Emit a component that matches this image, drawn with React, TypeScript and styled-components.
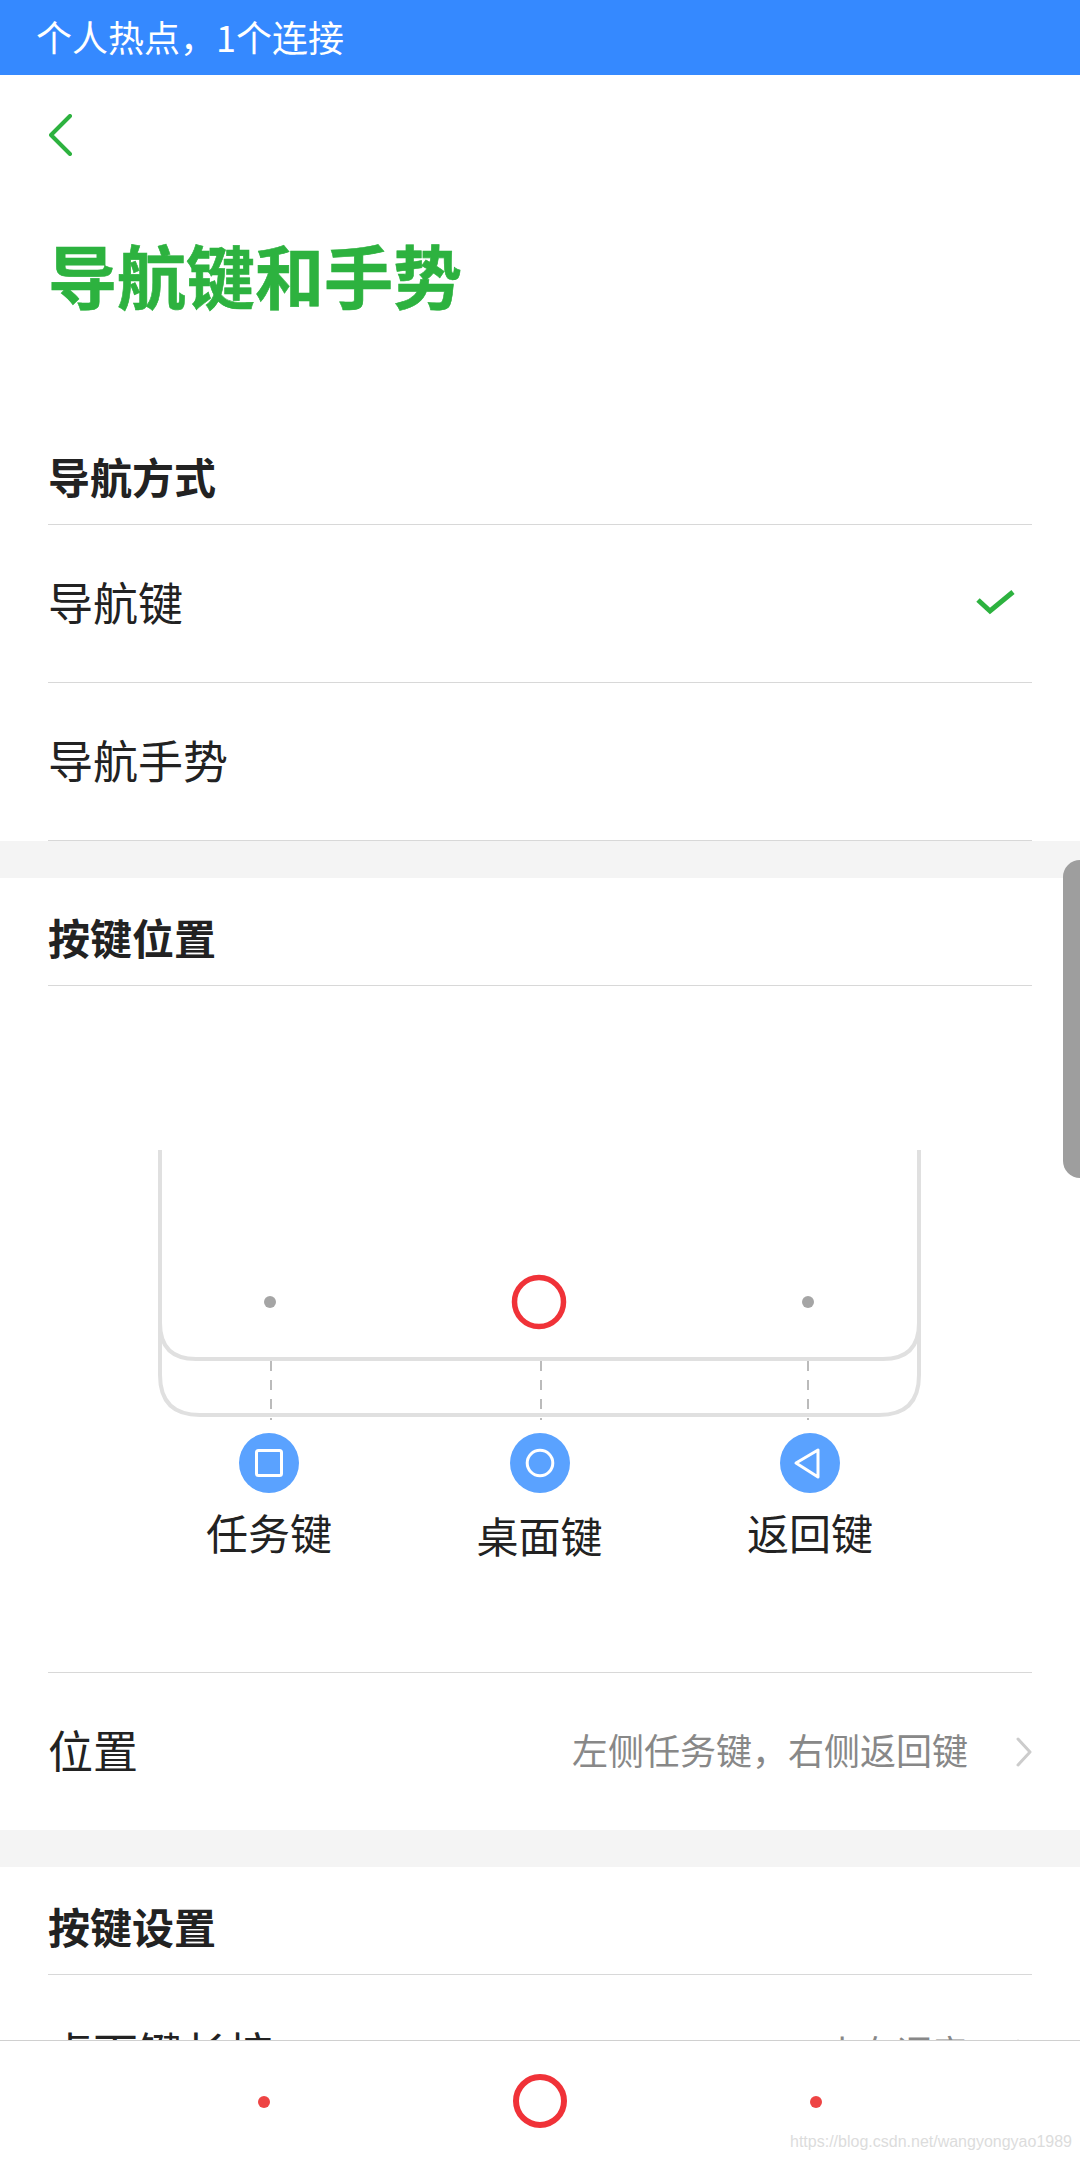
import styled, { createGlobalStyle } from "styled-components";

const GlobalStyle = createGlobalStyle`
    html, body {
        margin: 0;
        padding: 0;
        background: #fff;
    }
    * {
        box-sizing: border-box;
    }
`;

const LINE_COLOR = "#e0e0e0";
const RED = "#f03238";

// phone outline with the three on-screen keys and their guide lines
function PhoneDiagram() {
    return (
        <PhoneSvg viewBox="0 0 984 270">
            <g fill="none" stroke={LINE_COLOR} strokeWidth="4">
                <path d="M112 170 V225 Q112 265 152 265 H831 Q871 265 871 225 V170" />
                <path d="M112 0 V173 Q112 209 148 209 H835 Q871 209 871 173 V0" fill="#fff" />
            </g>
            <g stroke="#bbb" strokeWidth="2" strokeDasharray="10 9">
                <line x1="223" y1="211" x2="223" y2="270" />
                <line x1="493" y1="211" x2="493" y2="270" />
                <line x1="760" y1="211" x2="760" y2="270" />
            </g>
            <circle cx="222" cy="152" r="6" fill="#a5a5a5" />
            <circle cx="491" cy="152" r="24.5" fill="none" stroke={RED} strokeWidth="5.5" />
            <circle cx="760" cy="152" r="6" fill="#a5a5a5" />
        </PhoneSvg>
    );
}

function KeyGlyph({ kind }: { kind: "task" | "home" | "back" }) {
    return (
        <svg width="60" height="60" viewBox="0 0 60 60" fill="none" stroke="#fff" strokeWidth="3" strokeLinejoin="round">
            {kind === "task" && <rect x="17.5" y="17.5" width="25" height="25" rx="2" />}
            {kind === "home" && <circle cx="30" cy="30" r="12.8" />}
            {kind === "back" && <path d="M16 30 L38 17 V44 Z" />}
        </svg>
    );
}

const keys = [
    { label: "任务键", kind: "task" as const, drop: 0 },
    { label: "桌面键", kind: "home" as const, drop: 3 },
    { label: "返回键", kind: "back" as const, drop: 0 },
];

export default function App() {
    return (
        <Page>
            <GlobalStyle />
            <StatusBar>个人热点，1个连接</StatusBar>

            <BackRow>
                <svg width="24" height="42" viewBox="0 0 24 42" fill="none" stroke="#2db23f" strokeWidth="4" strokeLinecap="round" strokeLinejoin="round">
                    <path d="M21 2 L2 21 L21 40" />
                </svg>
            </BackRow>

            <PageTitle>导航键和手势</PageTitle>

            <Section>
                <SectionHeader>导航方式</SectionHeader>
                <Row>
                    <RowLabel>导航键</RowLabel>
                    <CheckIcon width="40" height="30" viewBox="0 0 40 30" fill="none" stroke="#2db23f" strokeWidth="5">
                        <path d="M2 11 L14 22 L37 3" />
                    </CheckIcon>
                </Row>
                <Row>
                    <RowLabel>导航手势</RowLabel>
                </Row>
            </Section>

            <Band />

            <Section>
                <SectionHeader>按键位置</SectionHeader>
                <Illustration>
                    <PhoneDiagram />
                    <KeyRow>
                        {keys.map((key) => (
                            <KeyColumn key={key.label}>
                                <KeyBadge>
                                    <KeyGlyph kind={key.kind} />
                                </KeyBadge>
                                <KeyLabel $drop={key.drop}>{key.label}</KeyLabel>
                            </KeyColumn>
                        ))}
                    </KeyRow>
                </Illustration>
                <Row $plain>
                    <RowLabel>位置</RowLabel>
                    <RowValue>左侧任务键，右侧返回键</RowValue>
                    <Chevron />
                </Row>
            </Section>

            <Band />

            <Section>
                <SectionHeader>按键设置</SectionHeader>
                <Row>
                    <RowLabel>桌面键长按</RowLabel>
                    <RowValue>小布语音</RowValue>
                    <Chevron />
                </Row>
            </Section>

            <ScrollHandle />

            <NavBar>
                <NavDot />
                <NavRing />
                <NavDot />
            </NavBar>
            <Watermark>https://blog.csdn.net/wangyongyao1989</Watermark>
        </Page>
    );
}

function Chevron() {
    return (
        <ChevronSvg width="16" height="30" viewBox="0 0 16 30" fill="none" stroke="#ccc" strokeWidth="3" strokeLinecap="round" strokeLinejoin="round">
            <path d="M2 2 L14 15 L2 28" />
        </ChevronSvg>
    );
}

const Page = styled.div`
    position: relative;
    width: 1080px;
    height: 2160px;
    overflow: hidden;
    background: #fff;
    color: #222;
    font-family: "Noto Sans CJK SC", "Noto Sans", sans-serif;
`;

const StatusBar = styled.div`
    height: 75px;
    padding-left: 36px;
    background: #3589ff;
    color: #fff;
    font-size: 36px;
    line-height: 72px;
`;

const BackRow = styled.div`
    height: 110px;
    padding: 39px 0 0 49px;
`;

const PageTitle = styled.h1`
    margin: 0 0 100px;
    padding-left: 48px;
    height: 132px;
    color: #2db23f;
    font-size: 69px;
    font-weight: 700;
    line-height: 178px;
    -webkit-text-stroke: 0.6px #2db23f;
`;

const Section = styled.section`
    padding: 0 48px;
    background: #fff;
`;

const SectionHeader = styled.h2`
    display: flex;
    align-items: flex-end;
    height: 108px;
    margin: 0;
    padding-bottom: 3px;
    border-bottom: 1px solid #d8d8d8;
    font-size: 42px;
    font-weight: 700;
    line-height: 90px;
`;

const Row = styled.div<{ $plain?: boolean }>`
    display: flex;
    align-items: center;
    height: ${(p) => (p.$plain ? "157px" : "158px")};
    border-bottom: ${(p) => (p.$plain ? "none" : "1px solid #d8d8d8")};
`;

const RowLabel = styled.span`
    flex: 1;
    margin-bottom: 5px;
    font-size: 45px;
`;

const RowValue = styled.span`
    margin-bottom: 5px;
    color: #888;
    font-size: 36px;
`;

const CheckIcon = styled.svg`
    margin-right: 16px;
`;

const ChevronSvg = styled.svg`
    margin-left: 48px;
`;

const Band = styled.div`
    height: 37px;
    background: #f4f4f4;
`;

const Illustration = styled.div`
    height: 687px;
    padding-top: 164px;
    border-bottom: 1px solid #d8d8d8;
`;

const PhoneSvg = styled.svg`
    display: block;
    width: 984px;
    height: 270px;
`;

const KeyRow = styled.div`
    display: grid;
    grid-template-columns: 270px 271px 270px;
    margin: 13px 0 0 86px;
`;

const KeyColumn = styled.div`
    display: flex;
    flex-direction: column;
    align-items: center;
`;

const KeyBadge = styled.div`
    width: 60px;
    height: 60px;
    border-radius: 50%;
    background: #5aa2ff;
`;

const KeyLabel = styled.div<{ $drop: number }>`
    margin-top: ${(p) => 9 + p.$drop}px;
    font-size: 42px;
    line-height: 60px;
`;

const ScrollHandle = styled.div`
    position: absolute;
    top: 860px;
    right: 0;
    width: 17px;
    height: 318px;
    border-radius: 22px 0 0 22px;
    background: #9e9e9e;
`;

const NavBar = styled.nav`
    position: absolute;
    left: 0;
    right: 0;
    bottom: 0;
    display: flex;
    align-items: center;
    justify-content: center;
    gap: 243px;
    height: 120px;
    border-top: 1px solid #d0d0d0;
    background: #fff;
`;

const NavDot = styled.span`
    width: 12px;
    height: 12px;
    margin-top: 2px;
    border-radius: 50%;
    background: #ee4444;
`;

const NavRing = styled.span`
    width: 54px;
    height: 54px;
    border: 6px solid ${RED};
    border-radius: 50%;
`;

const Watermark = styled.div`
    position: absolute;
    right: 8px;
    bottom: 6px;
    color: #dcdcdc;
    font-family: "Liberation Sans", sans-serif;
    font-size: 16px;
    line-height: 24px;
`;
